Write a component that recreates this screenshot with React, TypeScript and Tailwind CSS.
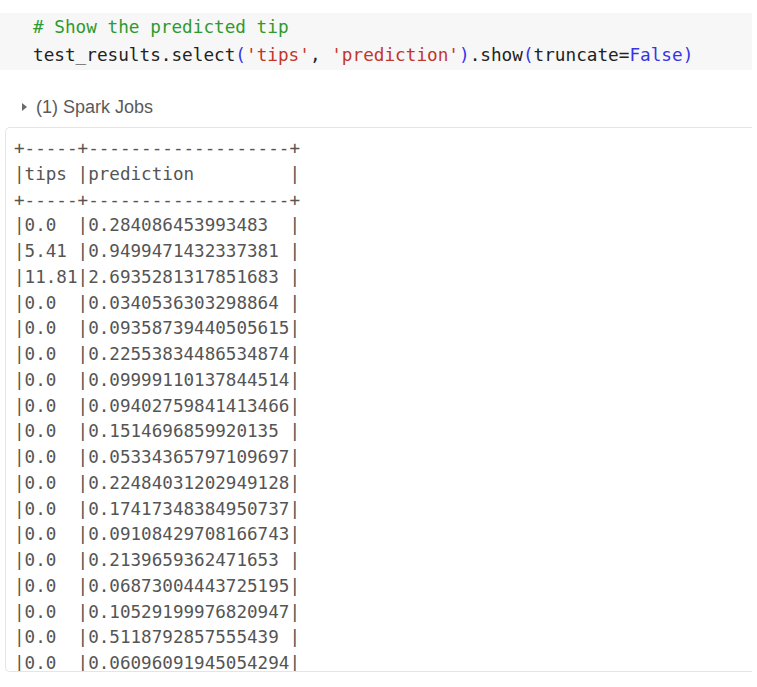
const rows: [string, string][] = [
  ["0.0  ", "0.284086453993483  "],
  ["5.41 ", "0.9499471432337381 "],
  ["11.81", "2.6935281317851683 "],
  ["0.0  ", "0.0340536303298864 "],
  ["0.0  ", "0.09358739440505615"],
  ["0.0  ", "0.22553834486534874"],
  ["0.0  ", "0.09999110137844514"],
  ["0.0  ", "0.09402759841413466"],
  ["0.0  ", "0.1514696859920135 "],
  ["0.0  ", "0.05334365797109697"],
  ["0.0  ", "0.22484031202949128"],
  ["0.0  ", "0.17417348384950737"],
  ["0.0  ", "0.09108429708166743"],
  ["0.0  ", "0.2139659362471653 "],
  ["0.0  ", "0.06873004443725195"],
  ["0.0  ", "0.10529199976820947"],
  ["0.0  ", "0.5118792857555439 "],
  ["0.0  ", "0.06096091945054294"],
];

const sep = "+-----+-------------------+";

export default function App() {
  const lines = [
    sep,
    "|tips |prediction         |",
    sep,
    ...rows.map(([a, b]) => `|${a}|${b}|`),
  ];

  return (
    <div className="w-[757px] h-[687px] bg-white overflow-hidden">
      {/* code cell */}
      <div className="pt-[13px]">
        <div className="w-[752px] h-[57px] bg-[#f7f7f7] pl-[33px] font-['DejaVu_Sans_Mono',monospace] text-[17.7px] leading-[28px] text-[#222] whitespace-pre">
          <div className="text-[#2e9a2e]"># Show the predicted tip</div>
          <div>
            test_results.select<span className="text-[#3535e6]">(</span>
            <span className="text-[#c4352a]">'tips'</span>,{" "}
            <span className="text-[#c4352a]">'prediction'</span>
            <span className="text-[#3535e6]">)</span>.show
            <span className="text-[#3535e6]">(</span>truncate=
            <span className="text-[#3535e6]">False</span>
            <span className="text-[#3535e6]">)</span>
          </div>
        </div>
      </div>

      {/* spark jobs toggle */}
      <div className="mt-[25px] h-[24px] flex items-center pl-[22px] gap-[9px] font-['Liberation_Sans',Arial,sans-serif] text-[18px] text-[#5a5a5a]">
        <svg width="5" height="8" viewBox="0 0 5 8" className="fill-[#6b6b6b]">
          <path d="M0 0 L5 4 L0 8 Z" />
        </svg>
        <span>(1) Spark Jobs</span>
      </div>

      {/* output */}
      <div className="mt-[8px] ml-[5px] w-[747px] h-[545px] overflow-hidden border border-r-0 border-[#e3e6e6] rounded-l-[5px] pt-[8px] pl-[8px]">
        <pre className="font-['DejaVu_Sans_Mono',monospace] text-[17.6px] leading-[25.75px] text-[#555]">
          {lines.join("\n")}
        </pre>
      </div>
    </div>
  );
}
